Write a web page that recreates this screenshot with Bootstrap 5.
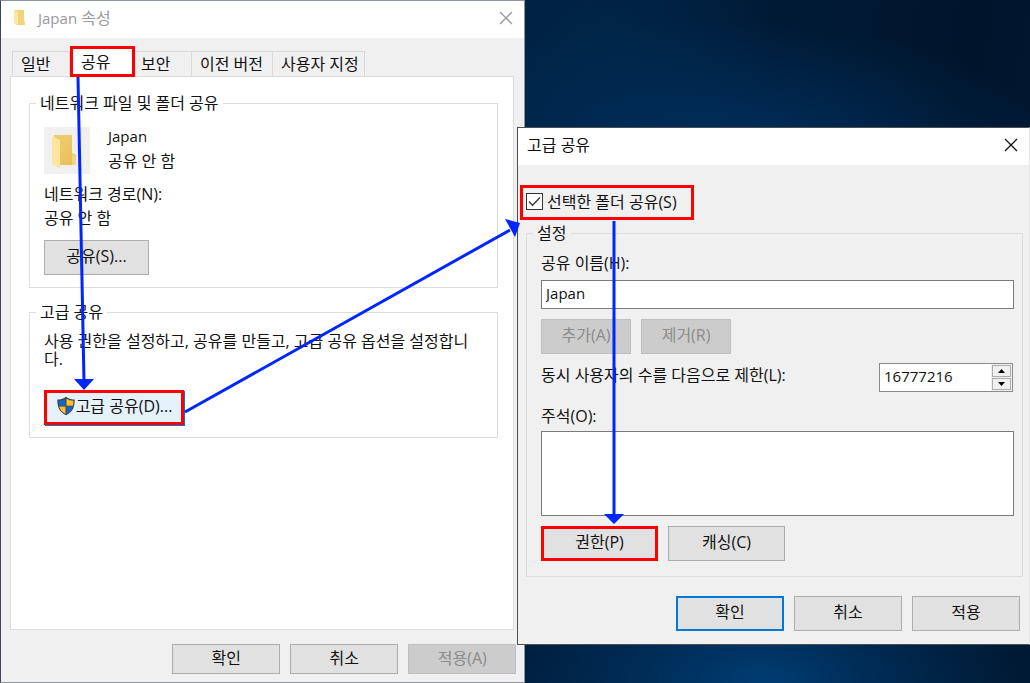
<!DOCTYPE html>
<html lang="ko">
<head>
<meta charset="utf-8">
<meta name="viewport" content="width=device-width, initial-scale=1">
<title>Japan 속성</title>
<link href="https://cdn.jsdelivr.net/npm/bootstrap@5.3.0/dist/css/bootstrap.min.css" rel="stylesheet">
<script src="https://cdn.jsdelivr.net/npm/bootstrap@5.3.0/dist/js/bootstrap.bundle.min.js"></script>
<style>
  body {
    font-family: "Open Sans", "Noto Sans CJK KR", sans-serif;
    font-size: 16px; line-height: 24px; color: #111;
    background: #001c3c;
  }
  .desktop {
    min-height: 100vh; overflow: hidden;
    background:
      radial-gradient(ellipse 260px 130px at 74% 100%, #003d74, transparent),
      radial-gradient(ellipse 330px 130px at 70% 22%, #00305e, transparent),
      radial-gradient(ellipse 170px 110px at 59% 6%, #002648, transparent),
      linear-gradient(100deg, #001f40 50%, #00152c 85%, #001a35);
  }
  .win { background: #f0f0f0; }
  .win-props { width: 51%; min-height: 100vh; border: 1px solid #8d93a0; border-left-color: #3b4557; }
  .win-adv { position: absolute; top: 127px; left: 50.2%; right: 0; border: 1px solid #4a5058; border-right-color: #e4e4e4; }
  .titlebar { height: 37px; background: #fff; padding: 0 7px 3px 9px; }
  .inactive { color: #999; }
  .latin { font-size: 15px; }
  .btn-close-win { border: 0; background: none; padding: 0; line-height: 0; color: inherit; }

  .tabs { padding: 8px 0 0 11px; }
  .tabs button {
    height: 25px; padding: 0 8px; border: 1px solid #d9d9d9; border-width: 1px 1px 0 0;
    background: #f0f0f0; line-height: 22px; color: #111; text-align: left; white-space: nowrap;
  }
  .tabs button:first-child { border-left-width: 1px; width: 58px; }
  .tabs button.on { height: 31px; width: 65px; margin-bottom: -1px; border: 3px solid #f00; background: #fff; position: relative; }
  .tabs button:nth-child(3) { width: 57px; padding-left: 6px; }
  .tabs button:nth-child(4) { width: 81px; }
  .tabs button:nth-child(5) { width: 92px; }
  .sheet { margin: 0 10px 0 9px; padding: 14px 15px 14px 18px; background: #fff; border: 1px solid #dcdcdc; }

  fieldset.group { border: 1px solid #dcdcdc; padding: 0 14px 12px; }
  .group + .group { margin-top: 12px; }
  .group legend { float: none; width: auto; margin: 0 0 0 -8px; padding: 0 4px; font-size: 16px; line-height: 24px; }
  .folder-row { padding-top: 9px; }
  .folder-box { width: 46px; height: 47px; background: #f0f0f0; }
  .two-lines { line-height: 25px; margin-left: 18px; }
  .share-row { padding-top: 10px; }
  .tight { line-height: 18px; margin: 8px 0 22px; }

  .wbtn {
    height: 35px; padding: 0 4px 3px; border: 1px solid #adadad; border-radius: 0; background: #e1e1e1;
    color: #111; font-size: 16px; line-height: 24px;
  }
  .wbtn:disabled { background: #ccc; border-color: #bfbfbf; color: #8b8b8b; opacity: 1; }
  .w-a { width: 108px; } .w-b { width: 105px; } .w-c { width: 90px; } .w-d { width: 117px; } .w-e { width: 140px; }
  .low { height: 30px; }
  .wbtn.primary { border: 2px solid #0078d7; }
  .wbtn.marked { border: 3px solid #f00; }
  .wbtn.hot { background: #e5f1fb; box-shadow: 1px 1px #0078d7; }

  .check-row { height: 35px; width: 174px; margin: 20px 0 1px 2px; border: 3px solid #f00; padding: 0 0 2px 3px; }
  .check-row input { appearance: none; width: 17px; height: 17px; margin: 0; border: 1px solid #333; background: #fff; }
  .check-row input:checked {
    background: #fff url("data:image/svg+xml,%3Csvg xmlns='http://www.w3.org/2000/svg' viewBox='0 0 15 15'%3E%3Cpath d='M2 7.5l3.5 3.7L13 3.5' fill='none' stroke='%23333' stroke-width='1.3'/%3E%3C/svg%3E");
  }
  fieldset.group-adv { margin: 0 6px 0 8px; padding: 0 8px 15px 14px; }
  .name-label { margin: 6px 0 5px; }
  .memo-label { margin: 12px 0 3px; }
  .field { display: block; width: 100%; border: 1px solid #7a7a7a; border-radius: 0; background: #fff; color: #111; padding: 0 4px 4px; outline: 0; }
  input.field { height: 29px; }
  textarea.field { height: 85px; resize: none; }
  .act-row { margin-top: 10px; gap: 10px; }
  .limit-row { margin-top: 9px; }
  .spin { width: 134px; height: 29px; border: 1px solid #8a8a8a; background: #fff; margin-right: 1px; }
  .spin input { border: 0; flex: 1 1 0; min-width: 0; padding: 0 4px 3px; background: none; outline: 0; color: #111; }
  .spin .arrows { width: 21px; background: #f0f0f0; padding: 1px; gap: 1px; }
  .spin button { flex: 1; border: 1px solid #adadad; background: #f0f0f0; padding: 0; line-height: 0; }
  .props-foot { padding: 14px 8px 8px; gap: 10px; }
  .adv-foot { padding: 19px 9px 13px; gap: 10px; }
  .marks { position: absolute; inset: 0; width: 100%; height: 100%; pointer-events: none; }
</style>
</head>
<body>
<main class="desktop position-relative">

  <section class="win win-props d-flex flex-column" aria-label="Japan 속성">
    <header class="titlebar inactive d-flex align-items-center justify-content-between">
      <div class="d-flex align-items-center">
        <svg width="20" height="20" viewBox="0 0 20 20" aria-hidden="true"><path d="M5 2h9v11l1 1v3H6z" fill="#f4d27c"/><path d="M4 2l4 2v14l-4-3z" fill="#fbe6a8"/></svg>
        <span class="ms-2"><span class="latin">Japan</span> 속성</span>
      </div>
      <button class="btn-close-win me-1" aria-label="닫기"><svg width="14" height="14" viewBox="0 0 14 14"><path d="M1 1l12 12M13 1L1 13" stroke="currentColor" stroke-width="1.3"/></svg></button>
    </header>

    <nav class="tabs d-flex align-items-end" role="tablist">
      <button role="tab">일반</button>
      <button role="tab" class="on" aria-selected="true">공유</button>
      <button role="tab">보안</button>
      <button role="tab">이전 버전</button>
      <button role="tab">사용자 지정</button>
    </nav>

    <div class="sheet flex-grow-1">
      <fieldset class="group">
        <legend>네트워크 파일 및 폴더 공유</legend>
        <div class="folder-row d-flex align-items-end">
          <div class="folder-box">
            <svg width="46" height="47" viewBox="0 0 46 47" aria-hidden="true">
              <defs><linearGradient id="gold" x1="0" y1="0" x2="1" y2="1"><stop offset="0" stop-color="#efce72"/><stop offset="1" stop-color="#e8bf55"/></linearGradient></defs>
              <path d="M10 8h18v18l4 2v10H14z" fill="url(#gold)"/>
              <path d="M8 9l8 4v29l-8-5z" fill="#fde5a0"/><path d="M28 27l4 2v9h-4z" fill="#f3d384"/>
            </svg>
          </div>
          <div class="two-lines"><div class="latin">Japan</div><div>공유 안 함</div></div>
        </div>
        <div class="mt-2">네트워크 경로(N):</div>
        <div>공유 안 함</div>
        <div class="share-row"><button class="btn wbtn w-b d-block">공유(S)...</button></div>
      </fieldset>

      <fieldset class="group">
        <legend>고급 공유</legend>
        <p class="tight">사용 권한을 설정하고, 공유를 만들고, 고급 공유 옵션을 설정합니다.</p>
        <button class="btn wbtn marked hot w-e d-flex align-items-center justify-content-center">
          <svg width="20" height="20" viewBox="0 0 20 20" aria-hidden="true">
            <path d="M10 .7C7 3 4 3.600 1.300 3.600c0 8 2.200 12.700 8.700 15.700 6.500-3 8.700-7.700 8.700-15.700C16 3.600 13 3 10 .7z" fill="#3f4348"/>
            <path d="M9.500 2.800v7H3c-.4-1.700-.4-3.400-.4-5 2.600-.2 4.800-.7 6.900-2z" fill="#1368c4"/>
            <path d="M10.500 2.800v7H17c.4-1.700.4-3.400.4-5-2.600-.2-4.800-.7-6.900-2z" fill="#fcbf2e"/>
            <path d="M3.200 10.500h6.300V18c-3.400-1.700-5.300-4-6.300-7.500z" fill="#fcbf2e"/>
            <path d="M16.800 10.500h-6.300V18c3.400-1.700 5.300-4 6.300-7.500z" fill="#1368c4"/>
          </svg>
          <span>고급 공유(D)...</span>
        </button>
      </fieldset>
    </div>

    <footer class="props-foot d-flex justify-content-end">
      <button class="btn wbtn low w-a">확인</button>
      <button class="btn wbtn low w-a">취소</button>
      <button class="btn wbtn low w-a" disabled>적용(A)</button>
    </footer>
  </section>

  <section class="win win-adv" aria-label="고급 공유">
    <header class="titlebar d-flex align-items-center justify-content-between">
      <span>고급 공유</span>
      <button class="btn-close-win me-1" aria-label="닫기"><svg width="14" height="14" viewBox="0 0 14 14"><path d="M1 1l12 12M13 1L1 13" stroke="currentColor" stroke-width="1.3"/></svg></button>
    </header>

    <div class="check-row d-flex align-items-center">
      <input type="checkbox" id="share" checked>
      <label for="share" class="ms-1">선택한 폴더 공유(S)</label>
    </div>

    <fieldset class="group group-adv">
      <legend>설정</legend>
      <label for="name" class="d-block name-label">공유 이름(H):</label>
      <input id="name" class="field latin" value="Japan">
      <div class="d-flex act-row">
        <button class="btn wbtn w-c" disabled>추가(A)</button>
        <button class="btn wbtn w-c" disabled>제거(R)</button>
      </div>
      <div class="limit-row d-flex justify-content-between">
        <label for="limit">동시 사용자의 수를 다음으로 제한(L):</label>
        <div class="spin d-flex">
          <input id="limit" class="latin" value="16777216">
          <div class="arrows d-flex flex-column">
            <button aria-label="늘리기"><svg width="7" height="4" viewBox="0 0 7 4"><path d="M0 4L3.500 0 7 4z"/></svg></button>
            <button aria-label="줄이기"><svg width="7" height="4" viewBox="0 0 7 4"><path d="M0 0L3.500 4 7 0z"/></svg></button>
          </div>
        </div>
      </div>
      <label for="memo" class="d-block memo-label">주석(O):</label>
      <textarea id="memo" class="field"></textarea>
      <div class="d-flex act-row">
        <button class="btn wbtn marked w-d">권한(P)</button>
        <button class="btn wbtn w-d">캐싱(C)</button>
      </div>
    </fieldset>

    <footer class="adv-foot d-flex justify-content-end">
      <button class="btn wbtn primary w-a">확인</button>
      <button class="btn wbtn w-a">취소</button>
      <button class="btn wbtn w-a">적용</button>
    </footer>
  </section>

  <svg class="marks" aria-hidden="true" fill="#0026ff" stroke="#0026ff">
    <path d="M78 77L84 382M185 412L510 230M614 221V516" fill="none" stroke-width="3"/>
    <path d="M74 379h20l-10 11zM505 219l15 4-5 14zM604 514h20l-10 10z" stroke="none"/>
  </svg>
</main>
</body>
</html>
